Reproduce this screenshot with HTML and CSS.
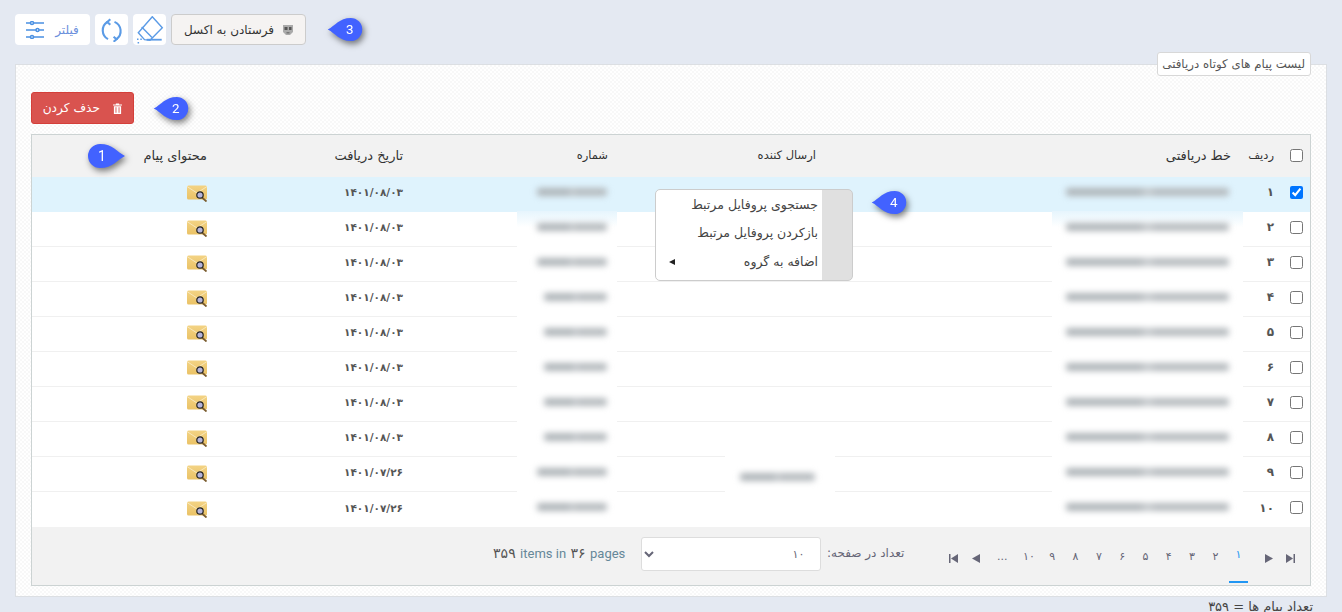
FILE: index.html
```html
<!DOCTYPE html>
<html lang="fa">
<head>
<meta charset="utf-8">
<title>لیست پیام های کوتاه دریافتی</title>
<link rel="stylesheet" href="styles.css">
</head>
<body>
<div class="page">
  <div class="toolbar">
    <button class="tool tool-filter">
      <svg class="ico" width="18" height="18" viewBox="0 0 18 18" fill="none" stroke="#4a90e2" stroke-width="1.500"><path d="M0 2h18M0 9h18M0 16h18"/><circle cx="6" cy="2" r="1.500" fill="#fff"/><circle cx="11.500" cy="9" r="1.500" fill="#fff"/><circle cx="6" cy="16" r="1.500" fill="#fff"/></svg>
      <span class="tool-label">فیلتر</span>
    </button>
    <button class="tool tool-refresh">
      <svg width="24" height="24" viewBox="0 0 24 24" fill="none" stroke="#5b9be6" stroke-width="2.100"><path d="M7.300 4A10 10 0 0 0 8 21.200"/><path d="M16.500 21.200A10 10 0 0 0 14.500 3.900"/><path d="M10.300 1.200L7.300 4l3 2.800"/><path d="M13.600 18.800l2.900 2.400-2.900 2.500"/></svg>
    </button>
    <button class="tool tool-eraser">
      <svg width="28" height="28" viewBox="0 0 28 28" fill="none" stroke="#5b9be6" stroke-width="1.400"><path d="M16.300.7l10 11L14 24.300l-5.500-.6-6.200-7z"/><path d="M5.700 11L16 21.500"/><path d="M10.700 23.700h15" stroke-width="1.800"/><path d="M1 23.300h1.500M4.300 23.300h1.500M1.600 26.700h1.500"/></svg>
    </button>
    <button class="tool tool-excel">
      <span>فرستادن به اکسل</span>
      <svg width="10" height="11" viewBox="0 0 10 11"><path d="M0 1h10v7l-3 3H3L0 8z" fill="#aaa"/><path d="M1.500 3h3v3h-3zM6 3h2.500v3H6z" fill="#555"/><path d="M3.500 8h3v1.500h-3z" fill="#777"/></svg>
    </button>
  </div>

  <section class="card">
    <div class="card-title">لیست پیام های کوتاه دریافتی</div>
    <button class="btn-delete">
      <span>حذف کردن</span>
      <svg width="9" height="11" viewBox="0 0 10 12" fill="#fff"><path d="M0 1.500h3.200V.5h3.600v1H10v1.200H0zM1 3.400h8V12H1zM2.800 4.600v6h1v-6zm3.400 0v6h1v-6z" fill-rule="evenodd"/></svg>
    </button>

    <div class="grid-wrap">
      <table class="grid">
        <colgroup>
          <col class="c-check"><col class="c-row"><col class="c-line"><col class="c-sender"><col class="c-number"><col class="c-date"><col class="c-body">
        </colgroup>
        <thead>
          <tr>
            <th class="cell-check"><input type="checkbox"></th>
            <th class="th-tight">ردیف</th><th>خط دریافتی</th><th class="th-tight">ارسال کننده</th><th class="th-tight">شماره</th><th>تاریخ دریافت</th><th>محتوای پیام</th>
          </tr>
        </thead>
        <tbody>
          <tr class="selected">
            <td class="cell-check"><input type="checkbox" checked></td><td class="num">۱</td>
            <td class="flush"><div class="patch patch-line patch-clear"><i class="smudge smudge-line"></i></div></td><td></td>
            <td class="flush"><div class="patch patch-number patch-clear"><i class="smudge smudge-n1"></i></div></td>
            <td class="date">۱۴۰۱/۰۸/۰۳</td>
            <td class="cell-icon"><svg class="mail" viewBox="0 0 21 17"><use href="#mail"/></svg></td>
          </tr>
          <tr>
            <td class="cell-check"><input type="checkbox"></td><td class="num">۲</td>
            <td class="flush"><div class="patch patch-line patch-fade"><i class="smudge smudge-line"></i></div></td><td></td>
            <td class="flush"><div class="patch patch-number patch-fade"><i class="smudge smudge-n1"></i></div></td>
            <td class="date">۱۴۰۱/۰۸/۰۳</td>
            <td class="cell-icon"><svg class="mail" viewBox="0 0 21 17"><use href="#mail"/></svg></td>
          </tr>
          <tr>
            <td class="cell-check"><input type="checkbox"></td><td class="num">۳</td>
            <td class="flush"><div class="patch patch-line"><i class="smudge smudge-line"></i></div></td><td></td>
            <td class="flush"><div class="patch patch-number"><i class="smudge smudge-n1"></i></div></td>
            <td class="date">۱۴۰۱/۰۸/۰۳</td>
            <td class="cell-icon"><svg class="mail" viewBox="0 0 21 17"><use href="#mail"/></svg></td>
          </tr>
          <tr>
            <td class="cell-check"><input type="checkbox"></td><td class="num">۴</td>
            <td class="flush"><div class="patch patch-line"><i class="smudge smudge-line"></i></div></td><td></td>
            <td class="flush"><div class="patch patch-number"><i class="smudge smudge-n2"></i></div></td>
            <td class="date">۱۴۰۱/۰۸/۰۳</td>
            <td class="cell-icon"><svg class="mail" viewBox="0 0 21 17"><use href="#mail"/></svg></td>
          </tr>
          <tr>
            <td class="cell-check"><input type="checkbox"></td><td class="num">۵</td>
            <td class="flush"><div class="patch patch-line"><i class="smudge smudge-line"></i></div></td><td></td>
            <td class="flush"><div class="patch patch-number"><i class="smudge smudge-n2"></i></div></td>
            <td class="date">۱۴۰۱/۰۸/۰۳</td>
            <td class="cell-icon"><svg class="mail" viewBox="0 0 21 17"><use href="#mail"/></svg></td>
          </tr>
          <tr>
            <td class="cell-check"><input type="checkbox"></td><td class="num">۶</td>
            <td class="flush"><div class="patch patch-line"><i class="smudge smudge-line"></i></div></td><td></td>
            <td class="flush"><div class="patch patch-number"><i class="smudge smudge-n2"></i></div></td>
            <td class="date">۱۴۰۱/۰۸/۰۳</td>
            <td class="cell-icon"><svg class="mail" viewBox="0 0 21 17"><use href="#mail"/></svg></td>
          </tr>
          <tr>
            <td class="cell-check"><input type="checkbox"></td><td class="num">۷</td>
            <td class="flush"><div class="patch patch-line"><i class="smudge smudge-line"></i></div></td><td></td>
            <td class="flush"><div class="patch patch-number"><i class="smudge smudge-n2"></i></div></td>
            <td class="date">۱۴۰۱/۰۸/۰۳</td>
            <td class="cell-icon"><svg class="mail" viewBox="0 0 21 17"><use href="#mail"/></svg></td>
          </tr>
          <tr>
            <td class="cell-check"><input type="checkbox"></td><td class="num">۸</td>
            <td class="flush"><div class="patch patch-line"><i class="smudge smudge-line"></i></div></td><td></td>
            <td class="flush"><div class="patch patch-number"><i class="smudge smudge-n2"></i></div></td>
            <td class="date">۱۴۰۱/۰۸/۰۳</td>
            <td class="cell-icon"><svg class="mail" viewBox="0 0 21 17"><use href="#mail"/></svg></td>
          </tr>
          <tr>
            <td class="cell-check"><input type="checkbox"></td><td class="num">۹</td>
            <td class="flush"><div class="patch patch-line"><i class="smudge smudge-line"></i></div></td>
            <td class="flush"><div class="patch patch-sender"><i class="smudge smudge-sender"></i></div></td>
            <td class="flush"><div class="patch patch-number"><i class="smudge smudge-n1"></i></div></td>
            <td class="date">۱۴۰۱/۰۷/۲۶</td>
            <td class="cell-icon"><svg class="mail" viewBox="0 0 21 17"><use href="#mail"/></svg></td>
          </tr>
          <tr>
            <td class="cell-check"><input type="checkbox"></td><td class="num">۱۰</td>
            <td class="flush"><div class="patch patch-line"><i class="smudge smudge-line"></i></div></td><td></td>
            <td class="flush"><div class="patch patch-number"><i class="smudge smudge-n1"></i></div></td>
            <td class="date">۱۴۰۱/۰۷/۲۶</td>
            <td class="cell-icon"><svg class="mail" viewBox="0 0 21 17"><use href="#mail"/></svg></td>
          </tr>
        </tbody>
      </table>

      <div class="grid-footer">
        <nav class="pager">
          <span class="pg pg-edge"><svg width="9" height="9" viewBox="0 0 9 9"><path d="M0 0l7 4.500L0 9z" fill="#667"/><path d="M7.500 0h1.500v9H7.500z" fill="#667"/></svg></span>
          <span class="pg pg-next"><svg width="8" height="9" viewBox="0 0 8 9"><path d="M0 0l8 4.500L0 9z" fill="#667"/></svg></span>
          <span class="pg pg-active">۱</span>
          <span class="pg">۲</span><span class="pg">۳</span><span class="pg">۴</span><span class="pg">۵</span><span class="pg">۶</span><span class="pg">۷</span><span class="pg">۸</span><span class="pg">۹</span><span class="pg">۱۰</span>
          <span class="pg pg-more">...</span>
          <span class="pg pg-prev"><svg width="8" height="9" viewBox="0 0 8 9"><path d="M8 0L0 4.500 8 9z" fill="#667"/></svg></span>
          <span class="pg pg-edge"><svg width="9" height="9" viewBox="0 0 9 9"><path d="M9 0L2 4.500 9 9z" fill="#667"/><path d="M0 0h1.500v9H0z" fill="#667"/></svg></span>
        </nav>
        <span class="per-label">تعداد در صفحه:</span>
        <select class="per-select"><option>۱۰</option></select>
        <span class="summary" dir="ltr">۳۵۹ <em>items in</em> ۳۶ <em>pages</em></span>
      </div>
    </div>
  </section>

  <div class="total">تعداد پیام ها = ۳۵۹</div>

  <ul class="menu">
    <li>جستجوی پروفایل مرتبط</li>
    <li>بازکردن پروفایل مرتبط</li>
    <li class="menu-sub"><span>اضافه به گروه</span><b class="menu-arrow"></b></li>
  </ul>

  <svg class="marker marker-1" width="37" height="24" viewBox="0 0 37 24"><path d="M37 12C29 8 25 0 12 0a12 12 0 0 0 0 24c13 0 17-8 25-12z"/><text x="14" y="17">1</text></svg>
  <svg class="marker marker-2" width="36" height="23" viewBox="0 0 36 24"><path d="M0 12C8 8 12 0 24 0a12 12 0 0 1 0 24C12 24 8 16 0 12z"/><text x="23" y="17">2</text></svg>
  <svg class="marker marker-3" width="36" height="23" viewBox="0 0 36 24"><path d="M0 12C8 8 12 0 24 0a12 12 0 0 1 0 24C12 24 8 16 0 12z"/><text x="23" y="17">3</text></svg>
  <svg class="marker marker-4" width="36" height="23" viewBox="0 0 36 24"><path d="M0 12C8 8 12 0 24 0a12 12 0 0 1 0 24C12 24 8 16 0 12z"/><text x="23" y="17">4</text></svg>

  <svg class="defs" width="0" height="0">
    <defs>
      <linearGradient id="mail-fill" x1="0" y1="0" x2="0" y2="1">
        <stop offset="0" stop-color="#f3d384"/>
        <stop offset="1" stop-color="#eac266"/>
      </linearGradient>
      <g id="mail">
        <rect x="1" y=".5" width="20" height="14" rx="1.500" fill="url(#mail-fill)"/>
        <path d="M1 1.500l10 6.500 10-6.500" fill="none" stroke="#f9e8bb" stroke-width="1"/>
        <path d="M16 12.500l4.500 4" stroke="#7a5c2e" stroke-width="1.800"/>
        <circle cx="14" cy="10" r="3.200" fill="#b5b5dc" stroke="#222" stroke-width="1.200"/>
      </g>
    </defs>
  </svg>
</div>
</body>
</html>
```
FILE: styles.css
```css
* { box-sizing: border-box; }
html, body { margin: 0; height: 612px; overflow: hidden; }
body {
  background: #e4e9f2;
  color: #444;
  font: 12px "DejaVu Sans", sans-serif;
}
.page {
  position: relative;
  height: 612px;
  padding: 14px 15px 0;
}
button { font: inherit; cursor: pointer; }

.toolbar { display: flex; gap: 5px; height: 31px; }
.tool {
  display: flex;
  align-items: center;
  justify-content: center;
  height: 31px;
  padding: 0;
  background: #fff;
  border: 0;
  border-radius: 4px;
}
.tool-filter { width: 75px; gap: 11px; }
.tool-label { color: #6b8fdc; font-size: 12px; }
.tool-refresh { width: 33px; }
.tool-eraser { width: 33px; }
.tool-excel {
  width: 135px;
  gap: 9px;
  color: #333;
  background: #f5f3f2;
  border: 1px solid #ccc;
  font-size: 12px;
}

.card {
  position: relative;
  width: 1312px;
  height: 533px;
  margin-top: 19px;
  padding: 27px 15px 0;
  border: 1px solid #dcdfe3;
  background-color: #fff;
  background-image: repeating-conic-gradient(#f8f8f8 0 25%, #fff 0 50%);
  background-size: 4px 4px;
}
.card-title {
  position: absolute;
  top: -13px;
  right: 15px;
  width: 154px;
  height: 24px;
  direction: rtl;
  text-align: right;
  padding-right: 5px;
  line-height: 22px;
  color: #555;
  background: #fff;
  border: 1px solid #d8d8d8;
  border-radius: 3px;
  font-size: 11.800px;
  white-space: nowrap;
}
.btn-delete {
  display: flex;
  align-items: center;
  justify-content: flex-end;
  gap: 13px;
  width: 103px;
  height: 32px;
  padding: 0 11px 0 0;
  color: #fff;
  background: #d9534f;
  border: 1px solid #d43f3a;
  border-radius: 3px;
  font-size: 12.200px;
}

.grid-wrap {
  width: 1280px;
  margin-top: 10px;
  border: 1px solid #ccd3d3;
  background: #fff;
}
.grid {
  width: 1278px;
  table-layout: fixed;
  border-collapse: separate;
  border-spacing: 0;
  direction: rtl;
}
.c-check { width: 27px; }
.c-row { width: 43px; }
.c-line { width: 415px; }
.c-sender { width: 208px; }
.c-number { width: 205px; }
.c-date { width: 196px; }
.c-body { width: 184px; }

.grid th {
  height: 42px;
  padding: 0 9px 2px 0;
  background: #f2f2f2;
  font-weight: normal;
  font-size: 13px;
  color: #333;
  text-align: right;
}
.grid th.th-tight { font-size: 11.500px; }
.grid td {
  height: 35px;
  padding: 0 9px 4px 0;
  border-bottom: 1px solid #f0f0f0;
  font-size: 12px;
  text-align: right;
}
.grid tbody tr:last-child td { border-bottom: 0; }
.grid .selected td { height: 34px; background: #dff3fd; border-bottom-color: #dff3fd; }
.grid th.cell-check { padding: 0 0 2px 0; }
.grid td.cell-check { padding: 0 0 4px 0; }
.cell-check input { display: block; width: 13px; height: 13px; margin: 0 7px 0 0; }
.num { font-weight: bold; color: #555; }
.grid td.date { font-weight: bold; color: #555; font-size: 10.500px; }
.mail { display: block; width: 21px; height: 17px; margin-top: 3px; }
.grid td.flush { padding: 0; vertical-align: top; }

.patch {
  display: flex;
  align-items: center;
  height: 36px;
  margin: -1px 0 -1px;
  padding-bottom: 5px;
  background: #fff;
}
.patch-clear { background: transparent; }
.patch-fade { background: linear-gradient(#e6f5fd, #fff 45%); }
.patch-line { width: 191px; padding-right: 14px; margin-right: -3px; }
.patch-number { width: 100px; padding-right: 10px; }
.patch-sender { width: 110px; margin-right: -10px; padding: 6px 20px 0 0; }
.smudge {
  display: block;
  height: 8px;
  background: linear-gradient(90deg, #aeb4b8 0 45%, #c6cacd 50%, #b4b9bd 56% 100%);
  filter: blur(3px);
  border-radius: 3px;
}
.smudge-line { width: 163px; }
.smudge-n1 { width: 70px; }
.smudge-n2 { width: 63px; }
.smudge-sender { width: 75px; }

.grid-footer {
  display: flex;
  align-items: center;
  height: 58px;
  padding-right: 9px;
  direction: rtl;
  background: #f2f2f2;
}
.pager { display: flex; align-self: stretch; align-items: stretch; margin-left: 38px; }
.pg {
  display: flex;
  align-items: center;
  justify-content: center;
  width: 23.300px;
  padding-top: 1px;
  color: #667;
  font-size: 11px;
}
.pg svg { margin-top: 4px; }
.pg-edge { width: 22px; }
.pg-next { width: 20px; margin-left: 9px; }
.pg-active {
  width: 19px;
  margin: 0 2px;
  height: 56px;
  color: #2196f3;
  border-bottom: 2px solid #2196f3;
}
.pg-more { width: 30px; }
.pg-prev { width: 23px; }
.per-label { width: 78px; color: #667; font-size: 12px; white-space: nowrap; margin-left: 5px; margin-top: -6px; }
.per-select {
  width: 180px;
  height: 34px;
  margin-top: -4px;
  padding: 0 12px;
  color: #667;
  background: #fff;
  border: 1px solid #ddd;
  border-radius: 3px;
  direction: rtl;
  font: 11px "DejaVu Sans", sans-serif;
}
.summary { margin-right: 16px; color: #555; font-size: 14px; margin-top: -6px; white-space: nowrap; }
.summary em { font: 13px Roboto, sans-serif; color: #668899; }

.total {
  margin: 2px 0 0;
  width: 1298px;
  direction: rtl;
  text-align: right;
  color: #444;
  font-size: 13px;
}

.menu {
  position: absolute;
  top: 189px;
  left: 655px;
  width: 198px;
  height: 92px;
  margin: 0;
  padding: 2px 0 0;
  list-style: none;
  direction: rtl;
  background: linear-gradient(270deg, #e0e0e0 30px, #fff 30px);
  border: 1px solid #ccc;
  border-radius: 5px;
  overflow: hidden;
}
.menu li {
  height: 28px;
  padding-right: 34px;
  line-height: 26px;
  color: #444;
  font-size: 12.500px;
  white-space: nowrap;
}
.menu-sub { display: flex; justify-content: space-between; align-items: center; padding-left: 13px; }
.menu-arrow {
  width: 0;
  height: 0;
  border-style: solid;
  border-width: 3.500px 6px 3.500px 0;
  border-color: transparent #222 transparent transparent;
}

.marker {
  position: absolute;
  overflow: visible;
  filter: drop-shadow(2px 3px 3px rgba(0,0,0,.5));
}
.marker path { fill: #4262ff; }
.marker text { fill: #fff; font: 14px Roboto, sans-serif; text-anchor: middle; }
.marker-1 { left: 88px; top: 144px; }
.marker-2 { left: 153px; top: 97px; }
.marker-3 { left: 327px; top: 18px; }
.marker-4 { left: 871px; top: 191px; }
.defs { position: absolute; }
```
